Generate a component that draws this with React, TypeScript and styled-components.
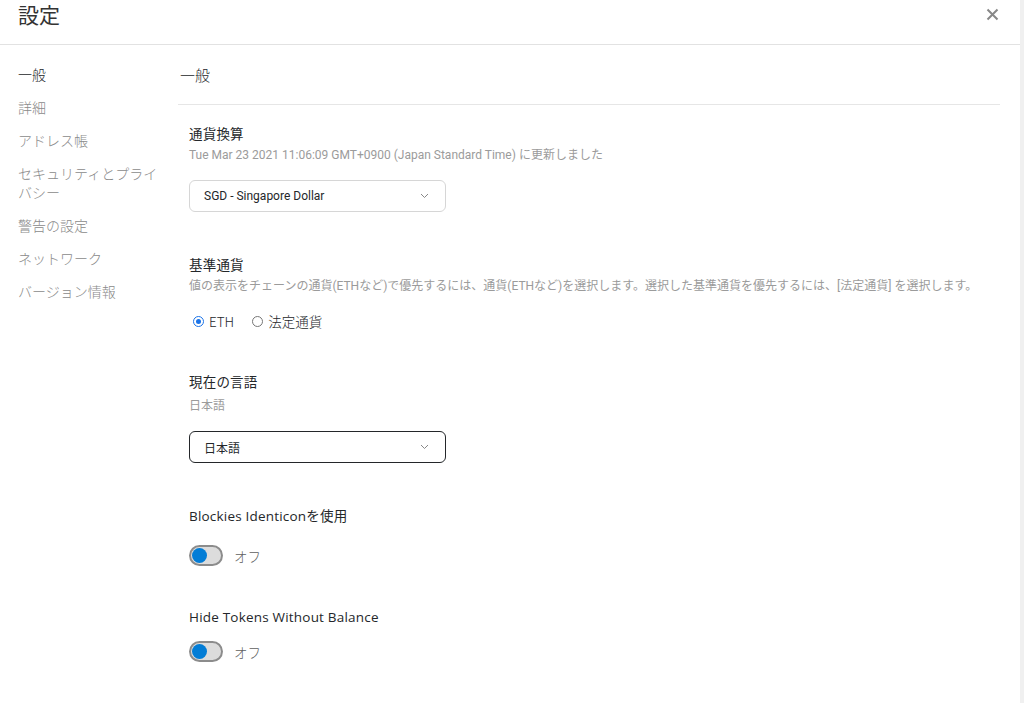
import React from "react";
import styled, { createGlobalStyle } from "styled-components";

const GlobalStyle = createGlobalStyle`
  html, body { margin: 0; padding: 0; background: #fff; }
  body {
    font-family: Roboto, "Noto Sans CJK JP", sans-serif;
    color: #24272a;
  }
  * { box-sizing: border-box; }
`;

const Page = styled.div`
  height: 703px;
  overflow-y: scroll;
  overflow-x: hidden;
  border-right: 4px solid #f0f0f0;
`;

const Header = styled.header`
  height: 45px;
  display: flex;
  align-items: flex-start;
  justify-content: space-between;
  padding: 3px 20px 0 18px;
  border-bottom: 1px solid #e2e2e2;
`;

const Title = styled.h1`
  margin: 0;
  font-size: 21px;
  font-weight: 400;
  line-height: 22px;
  color: #333;
  font-family: "Noto Sans CJK JP", sans-serif;
`;

const Close = styled.button`
  border: none;
  background: none;
  padding: 0;
  margin-top: 3px;
  width: 16px;
  height: 16px;
  display: flex;
  align-items: center;
  justify-content: center;
  cursor: pointer;
`;

const Body = styled.div`
  display: grid;
  grid-template-columns: 160px 1fr;
  padding: 13px 20px 40px 18px;
`;

const Sidebar = styled.nav`
  display: flex;
  flex-direction: column;
  padding-right: 14px;
`;

const NavItem = styled.div<{ $active?: boolean }>`
  font-family: "Noto Sans CJK JP", sans-serif;
  font-size: 14px;
  line-height: 19px;
  padding: 7px 0;
  color: ${(p) => (p.$active ? "#24272a" : "#8a8a8a")};
  font-weight: 300;
`;

const Content = styled.main`
  display: flex;
  flex-direction: column;
`;

const SectionTitle = styled.div`
  font-family: "Noto Sans CJK JP", sans-serif;
  font-size: 15px;
  line-height: 19px;
  font-weight: 300;
  color: #24272a;
  padding: 7px 2px 20px;
  border-bottom: 1px solid #e6e6e6;
`;

const Settings = styled.div`
  display: flex;
  flex-direction: column;
  padding: 20px 0 0 11px;
`;

const Setting = styled.section<{ $space?: number }>`
  display: flex;
  flex-direction: column;
  margin-bottom: ${(p) => p.$space ?? 44}px;
`;

const Label = styled.div`
  font-size: 13.5px;
  line-height: 18px;
  color: #24272a;
  font-family: "Open Sans", "Noto Sans CJK JP", sans-serif;
  letter-spacing: 0.2px;
`;

const Desc = styled.div<{ $gap?: number }>`
  font-size: 12px;
  line-height: 16px;
  color: #9b9b9b;
  margin-top: ${(p) => p.$gap ?? 4}px;
  font-family: Roboto, "Noto Sans CJK JP", sans-serif;
`;

const Select = styled.div<{ $focused?: boolean }>`
  margin-top: 17px;
  width: 257px;
  height: 32px;
  border-radius: 6px;
  border: ${(p) => (p.$focused ? "1.5px solid #24272a" : "1px solid #d6d6d6")};
  display: flex;
  align-items: center;
  justify-content: space-between;
  padding: 0 16px 0 14px;
  font-size: 12px;
  color: #24272a;
  font-family: Roboto, "Noto Sans CJK JP", sans-serif;
`;

const RadioRow = styled.div`
  display: flex;
  align-items: center;
  gap: 14px;
  margin-top: 17px;
`;

const RadioOption = styled.label`
  display: flex;
  align-items: center;
  gap: 5px;
  font-size: 13.5px;
  color: #24272a;
  font-family: "Noto Sans CJK JP", sans-serif;
  font-weight: 300;
`;

const RadioDot = styled.span<{ $checked?: boolean }>`
  width: 11px;
  height: 11px;
  border-radius: 50%;
  margin-left: 4px;
  border: 1px solid ${(p) => (p.$checked ? "#1a73e8" : "#767676")};
  display: flex;
  align-items: center;
  justify-content: center;
  &::after {
    content: "";
    width: 5px;
    height: 5px;
    border-radius: 50%;
    background: ${(p) => (p.$checked ? "#1a73e8" : "transparent")};
  }
`;

const ToggleRow = styled.div<{ $gap?: number }>`
  display: flex;
  align-items: center;
  gap: 11px;
  margin-top: ${(p) => p.$gap ?? 19}px;
`;

const Track = styled.div`
  width: 34px;
  height: 21px;
  border-radius: 11px;
  background: #dcdcdc;
  border: 2px solid #8c8c8c;
  display: flex;
  align-items: center;
  padding-left: 1px;
`;

const Knob = styled.div`
  width: 15px;
  height: 15px;
  border-radius: 50%;
  background: #037dd6;
`;

const ToggleText = styled.span`
  font-size: 13.5px;
  color: #5f5f5f;
  font-family: "Noto Sans CJK JP", sans-serif;
  font-weight: 300;
`;

const Chevron = () => (
  <svg width="9" height="6" viewBox="0 0 9 6" fill="none">
    <path d="M1 1l3.5 3.5L8 1" stroke="#888" strokeWidth="1" />
  </svg>
);

const Toggle = ({ gap }: { gap?: number }) => (
  <ToggleRow $gap={gap}>
    <Track>
      <Knob />
    </Track>
    <ToggleText>オフ</ToggleText>
  </ToggleRow>
);

export default function App() {
  const nav = [
    "一般",
    "詳細",
    "アドレス帳",
    "セキュリティとプライバシー",
    "警告の設定",
    "ネットワーク",
    "バージョン情報",
  ];
  return (
    <Page>
      <GlobalStyle />
      <Header>
        <Title>設定</Title>
        <Close aria-label="close">
          <svg width="13" height="13" viewBox="0 0 13 13">
            <path d="M1.5 1.5l10 10M11.5 1.5l-10 10" stroke="#888" strokeWidth="2" />
          </svg>
        </Close>
      </Header>
      <Body>
        <Sidebar>
          {nav.map((n, i) => (
            <NavItem key={n} $active={i === 0}>
              {n}
            </NavItem>
          ))}
        </Sidebar>
        <Content>
          <SectionTitle>一般</SectionTitle>
          <Settings>
            <Setting>
              <Label>通貨換算</Label>
              <Desc>Tue Mar 23 2021 11:06:09 GMT+0900 (Japan Standard Time) に更新しました</Desc>
              <Select>
                <span>SGD - Singapore Dollar</span>
                <Chevron />
              </Select>
            </Setting>
            <Setting $space={42}>
              <Label>基準通貨</Label>
              <Desc>
                値の表示をチェーンの通貨(ETHなど)で優先するには、通貨(ETHなど)を選択します。選択した基準通貨を優先するには、[法定通貨] を選択します。
              </Desc>
              <RadioRow>
                <RadioOption>
                  <RadioDot $checked />
                  ETH
                </RadioOption>
                <RadioOption>
                  <RadioDot />
                  法定通貨
                </RadioOption>
              </RadioRow>
            </Setting>
            <Setting>
              <Label>現在の言語</Label>
              <Desc $gap={7}>日本語</Desc>
              <Select $focused>
                <span>日本語</span>
                <Chevron />
              </Select>
            </Setting>
            <Setting $space={42}>
              <Label>Blockies Identiconを使用</Label>
              <Toggle gap={20} />
            </Setting>
            <Setting>
              <Label>Hide Tokens Without Balance</Label>
              <Toggle gap={15} />
            </Setting>
          </Settings>
        </Content>
      </Body>
    </Page>
  );
}
